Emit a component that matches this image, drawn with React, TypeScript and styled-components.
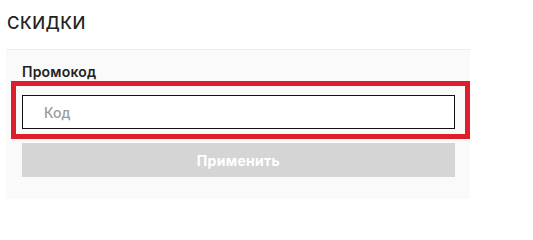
import styled, { createGlobalStyle } from "styled-components";

const GlobalStyle = createGlobalStyle`
  body {
    margin: 0;
    background: #ffffff;
    font-family: "Inter", "Noto Sans", sans-serif;
    color: #222222;
  }
`;

const Page = styled.div`
  width: 533px;
  height: 230px;
  padding-top: 13px;
  box-sizing: border-box;
`;

const Title = styled.h2`
  margin: 0 0 0 7px;
  font-size: 17px;
  font-weight: 500;
  line-height: 20px;
  letter-spacing: 0.5px;
  text-transform: uppercase;
  color: #222222;
`;

const Panel = styled.div`
  margin: 16px 0 0 6px;
  width: 464px;
  height: 150px;
  box-sizing: border-box;
  background: #fafafa;
  border-top: 1px solid #ededed;
  padding: 13px 15px 0 16px;
  display: flex;
  flex-direction: column;
`;

const Label = styled.label`
  font-size: 14px;
  font-weight: 600;
  line-height: 18px;
  letter-spacing: 0.2px;
  color: #222222;
  margin-bottom: 14px;
`;

const InputWrap = styled.div`
  position: relative;
  height: 34px;
  margin-bottom: 14px;
`;

const Input = styled.input`
  width: 100%;
  height: 100%;
  box-sizing: border-box;
  border: 1px solid #111111;
  background: #ffffff;
  padding: 0 0 0 21px;
  font-family: "Inter", "Noto Sans", sans-serif;
  font-size: 14px;
  font-weight: 500;
  outline: none;

  &::placeholder {
    color: #9a9a9a;
  }
`;

const Highlight = styled.div`
  position: absolute;
  top: -14px;
  left: -11px;
  right: -15px;
  bottom: -10px;
  border: 5px solid #dd1f2d;
  pointer-events: none;
`;

const ApplyButton = styled.button`
  height: 34px;
  border: none;
  background: #d5d5d5;
  color: #ffffff;
  font-family: "Inter", "Noto Sans", sans-serif;
  font-size: 14px;
  font-weight: 700;
  letter-spacing: 0.3px;
  cursor: default;
`;

export default function App() {
  return (
    <Page>
      <GlobalStyle />
      <Title>Скидки</Title>
      <Panel>
        <Label>Промокод</Label>
        <InputWrap>
          <Input placeholder="Код" />
          <Highlight />
        </InputWrap>
        <ApplyButton disabled>Применить</ApplyButton>
      </Panel>
    </Page>
  );
}
